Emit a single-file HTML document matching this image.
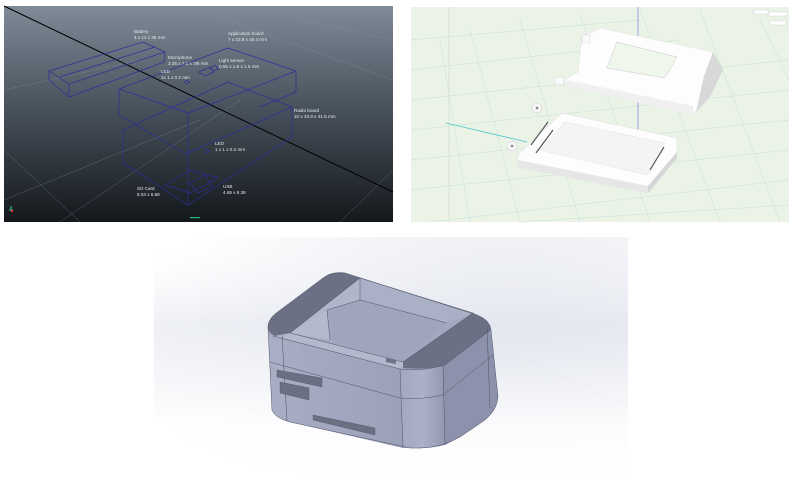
<!DOCTYPE html>
<html><head><meta charset="utf-8"><style>
html,body{margin:0;padding:0;background:#fff;width:800px;height:501px;overflow:hidden}
svg{display:block}
text{font-family:"Liberation Sans",sans-serif;fill:#e6e9ee;font-size:4.6px}
</style></head><body>
<svg width="800" height="501" viewBox="0 0 800 501" xmlns="http://www.w3.org/2000/svg">
<defs>
<linearGradient id="lg" x1="0" y1="0" x2="0" y2="1"><stop offset="0" stop-color="#7f8b97"/><stop offset="0.45" stop-color="#4a545f"/><stop offset="1" stop-color="#14181c"/></linearGradient>
<radialGradient id="bg3" cx="0.75" cy="0.45" r="0.8"><stop offset="0" stop-color="#dfe3ec"/><stop offset="0.5" stop-color="#eef0f5"/><stop offset="1" stop-color="#ffffff"/></radialGradient>
<linearGradient id="bg3b" x1="0" y1="0" x2="0" y2="1"><stop offset="0" stop-color="#fff" stop-opacity="0"/><stop offset="0.35" stop-color="#e4e7ef" stop-opacity="0.6"/><stop offset="0.75" stop-color="#fff" stop-opacity="0.8"/><stop offset="1" stop-color="#fff"/></linearGradient>
<linearGradient id="fr" x1="0" y1="0" x2="1" y2="0"><stop offset="0" stop-color="#a7acc3"/><stop offset="1" stop-color="#9ca1ba"/></linearGradient>
<linearGradient id="cr" x1="0" y1="0" x2="1" y2="0"><stop offset="0" stop-color="#a3a8c0"/><stop offset="0.5" stop-color="#acb1c8"/><stop offset="1" stop-color="#9398b1"/></linearGradient>
</defs>
<!-- Left panel -->
<rect x="4" y="6" width="389" height="216" fill="url(#lg)"/>
<g stroke="#8e98a3" stroke-width="0.5" opacity="0.5" fill="none">
<path d="M4 90 L140 60 M4 200 L200 120 M60 222 L240 100 M300 20 L393 40 M200 10 L393 80 M340 222 L393 170 M4 150 L80 222"/>
</g>
<line x1="4" y1="6" x2="393" y2="192" stroke="#000" stroke-width="1"/>
<g stroke="#2a2e9a" stroke-width="0.7" fill="none">
<path d="M49 71 L143 42 L165 52 L69 84 Z M49 71 L49 80 L69 97 L164 62 L165 52 M69 84 L69 97 M60 77 L155 47"/>
<path d="M119 89 L228 48 L296 71 L188 113 Z M119 89 L119 115 L188 155 L188 113 M296 71 L296 92 L260 107"/>
<path d="M123 130 L228 82 L292 107 L188 153 M123 130 L123 163 L188 205 L292 137 L292 107 M188 153 L188 205"/>
<path d="M165 185 L190 170 L218 178 L190 193 Z M190 183 L205 175 L212 186 L198 193 Z"/>
<path d="M199 72 L210 67 L214 72 L205 76 Z M210 68 L215 65 L218 69 L213 71 Z"/>
<path d="M184 82 L187 80 L190 82 L187 84 Z M205 151 L207 149 L209 151 L207 153 Z"/>
</g>
<text x="134" y="33">Battery</text><text x="134" y="39">4 x 12 x 35 mm</text>
<text x="228" y="35">Application board</text><text x="228" y="41">7 x 23.9 x 40.4 mm</text>
<text x="168" y="59">Microphone</text><text x="168" y="65">3.35 x 7.1 x .98 mm</text>
<text x="219" y="62">Light sensor</text><text x="219" y="68">0.55 x 1.6 x 1.5 mm</text>
<text x="161" y="73">LED</text><text x="161" y="79">1x 1 x 0.2 mm</text>
<text x="294" y="112">Radio board</text><text x="294" y="118">10 x 23.8 x 41.5 mm</text>
<text x="215" y="145">LED</text><text x="215" y="151">1 x 1 x 0.2 mm</text>
<text x="137" y="190">SD Card</text><text x="137" y="196">8.03 x 8.68</text>
<text x="223" y="188">USB</text><text x="223" y="194">4.65 x 8.36</text>
<path d="M9 210 L13 210 M11 210 L11 206" stroke="#3c9" stroke-width="1"/><circle cx="12" cy="211" r="1.2" fill="#d33"/>
<rect x="190" y="217" width="10" height="1.2" fill="#2b7"/>
<!-- Right panel -->
<rect x="411" y="7" width="378" height="215" fill="#eaf3e6"/>
<g stroke="#c4e2da" stroke-width="0.5" fill="none">
<path d="M411 40 L640 20 M411 70 L680 40 M411 100 L789 60 M411 130 L789 90 M411 160 L789 120 M411 190 L789 150 M430 222 L789 180 M520 222 L789 205"/>
<path d="M440 40 L470 222 M470 30 L520 222 M520 20 L580 222 M580 15 L650 222 M640 10 L720 222 M700 10 L780 222 M760 20 L789 80"/>
</g>
<line x1="449" y1="7" x2="449" y2="222" stroke="#cfd8cf" stroke-width="0.6"/>
<line x1="638" y1="7" x2="638" y2="165" stroke="#8d8fe0" stroke-width="0.8"/>
<line x1="446" y1="123" x2="527" y2="142" stroke="#4cc7cf" stroke-width="0.8"/>
<rect x="754" y="10" width="14" height="4" fill="#fff" stroke="#ccc" stroke-width="0.4"/><rect x="769" y="12" width="18" height="4" fill="#fff" stroke="#ccc" stroke-width="0.4"/><rect x="770" y="21" width="16" height="4" fill="#fff" stroke="#ccc" stroke-width="0.4"/>
<!-- lid -->
<path d="M582 37 L600 28 L713 52 L723 70 L710 92 L693 115 L567 86 L565 80 L578 72 Z" fill="#fdfdfd" stroke="#e4e4e4" stroke-width="0.5"/>
<path d="M567 80 L693 106 L693 115 L567 86 Z" fill="#f0f0f0"/>
<path d="M713 52 L723 70 L710 97 L696 112 L704 76 Z" fill="#d8d8d8"/>
<path d="M617 42 L677 57 L665 78 L607 68 Z" fill="#eff6ec" stroke="#bbb" stroke-width="0.4"/>
<rect x="582" y="35" width="8" height="8" fill="#f8f8f8" stroke="#ccc" stroke-width="0.4"/>
<rect x="555" y="77" width="9" height="8" fill="#f8f8f8" stroke="#ccc" stroke-width="0.4"/>
<!-- base -->
<path d="M518 155 L562 113 L677 138 L677 158 L648 193 L518 167 Z" fill="#fdfdfd" stroke="#ddd" stroke-width="0.5"/>
<path d="M540 150 L565 122 L665 143 L648 175 Z" fill="#f4f4f4" stroke="#ddd" stroke-width="0.4"/>
<path d="M518 160 L648 186 L648 193 L518 167 Z" fill="#e6e6e6"/>
<path d="M648 186 L677 152 L677 158 L648 193 Z" fill="#d5d5d5"/>
<path d="M531 145 L548 122 M536 153 L553 130 M650 170 L664 147" stroke="#555" stroke-width="1.2"/>
<circle cx="537" cy="108" r="5" fill="#f6f6f6" stroke="#ccc" stroke-width="0.5"/><circle cx="537" cy="108" r="1.3" fill="#888"/>
<circle cx="512" cy="146" r="5" fill="#f6f6f6" stroke="#ccc" stroke-width="0.5"/><circle cx="512" cy="146" r="1.3" fill="#888"/>
<!-- Bottom panel -->
<rect x="154" y="237" width="474" height="251" fill="url(#bg3)"/>
<rect x="154" y="237" width="474" height="251" fill="url(#bg3b)"/>
<!-- body silhouette -->
<path d="M268 327 Q268 320 275 314 L323 278 Q332 271 345 273 L477 315 Q490 320 491 330 L498 397 Q497 410 485 420 L460 437 Q440 448 420 448 L410 448 L290 422 Q275 418 272 410 Z" fill="#9ea3bc"/>
<!-- front face -->
<path d="M282 335 L400 368 L403 448 L290 422 L287 420 Z" fill="url(#fr)"/>
<!-- corner -->
<path d="M400 368 Q420 372 443 366 L445 445 Q430 449 410 448 L403 448 Z" fill="url(#cr)"/>
<!-- right face -->
<path d="M443 366 L487 327 Q491 330 491 335 L498 397 Q497 410 485 420 L460 437 L445 445 Z" fill="#8d92ac"/>
<!-- left face -->
<path d="M268 327 Q270 333 282 335 L287 420 Q275 418 272 410 Z" fill="#a9aec5"/>
<!-- top opening interior -->
<path d="M290 333 L360 278 L473 313 L403 362 Z" fill="#a3a8c0"/>
<path d="M290 333 L327 310 L330 340 Z" fill="#b5b9cd"/>
<path d="M327 310 L360 300 L360 278 L290 333 Z" fill="#b0b5ca"/>
<path d="M360 278 L473 313 L447 323 L360 300 Z" fill="#aab0c6"/>
<path d="M330 340 L327 310 L360 300 L447 323 L403 362 Z" fill="#a0a5bd"/>
<!-- dark rim ends -->
<path d="M268 327 Q268 320 275 314 L323 278 Q332 271 345 273 L360 278 L290 333 L275 336 Q268 333 268 327 Z" fill="#6c7084"/>
<path d="M473 313 L477 315 Q490 320 491 330 L445 365 Q430 370 403 368 L403 362 Z" fill="#6c7084"/>
<!-- front rim light strip -->
<path d="M275 336 L290 333 L403 362 L403 368 L400 369 Z" fill="#b4b8cc"/>
<g stroke="#4f5367" stroke-width="0.5" fill="none">
<path d="M268 327 Q268 320 275 314 L323 278 Q332 271 345 273 L477 315 Q490 320 491 330 L498 397 Q497 410 485 420 L460 437 Q440 448 420 448 L410 448 L290 422 Q275 418 272 410 Z"/>
<path d="M290 333 L360 278 L473 313 L403 362 Z M360 278 L360 300 L447 323 M327 310 L360 300 M327 310 L330 340"/>
<path d="M273 336 L400 369 Q420 372 445 365 L490 330"/>
<path d="M270 362 L400 398 Q422 400 443 395 L493 355"/>
<path d="M282 335 L287 421 M400 369 L403 448 M443 366 L445 445 M487 327 L490 408"/>
</g>
<path d="M386 358 L396 360 L396 364 L386 362 Z" fill="#6f7388"/>
<!-- slots -->
<path d="M277 370 L322 378 L322 387 L277 377 Z" fill="#6b6f82" stroke="#4f5367" stroke-width="0.4"/>
<path d="M280 382 L309 388 L309 400 L280 393 Z" fill="#6b6f82" stroke="#4f5367" stroke-width="0.4"/>
<path d="M313 415 L375 428 L375 435 L313 420 Z" fill="#6b6f82" stroke="#4f5367" stroke-width="0.4"/>
</svg>
</body></html>
